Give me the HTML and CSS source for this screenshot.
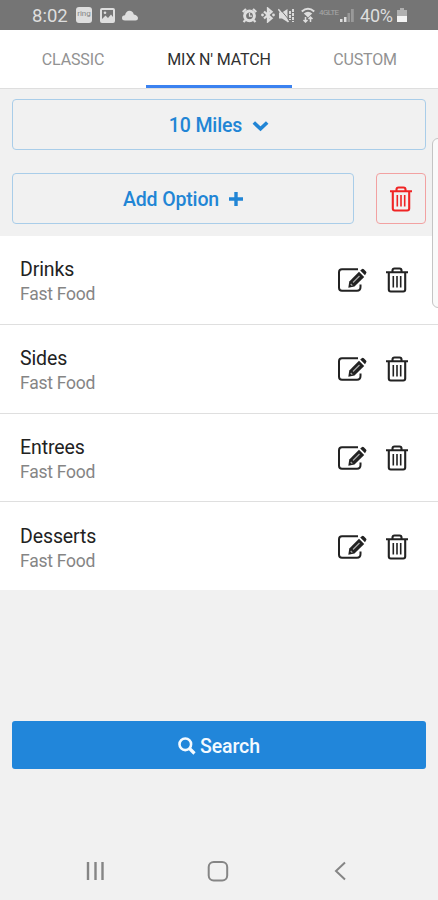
FILE: index.html
```
<!DOCTYPE html>
<html lang="en">
<head>
<meta charset="utf-8">
<title>Mix N' Match</title>
<link rel="stylesheet" href="styles.css">
</head>
<body>
<svg class="defs" aria-hidden="true">
  <symbol id="trash" viewBox="0 0 24 28">
    <path d="M1 6.200H23M7.500 6V4.500Q7.500 2.500 9.500 2.500H14.500Q16.500 2.500 16.500 4.500V6M3.800 6V23.500Q3.800 25.500 5.800 25.500H18.200Q20.200 25.500 20.200 23.500V6" fill="none" stroke="currentColor" stroke-width="2.100"/>
    <path d="M8.300 10V21.500M12 10V21.500M15.700 10V21.500" fill="none" stroke="currentColor" stroke-width="1.600"/>
  </symbol>
  <symbol id="edit" viewBox="0 0 30 26">
    <path d="M21 2.300H5Q2 2.300 2 5.300V20.700Q2 23.700 5 23.700H20Q23.500 23.700 23.500 20V17.500" fill="none" stroke="currentColor" stroke-width="2"/>
    <path d="M11.300 20.700L12.300 14.500L22 4.800L27.200 10L17.500 19.500Z" fill="currentColor"/>
    <path d="M23.200 3.600L24.800 2.200Q25.800 1.400 26.800 2.300L29 4.500Q30 5.500 29 6.500L28 8.300Z" fill="currentColor"/>
    <path d="M16 15.500L22.500 9M13.700 17L15.300 18.600" fill="none" stroke="#a5a5a5" stroke-width="1.300"/>
  </symbol>
</svg>
<div class="screen">
  <header class="status">
    <span class="clock">8:02</span>
    <span class="ring">ring</span>
    <svg class="photo" viewBox="0 0 15 15"><rect x="1" y="1" width="13" height="13" rx="1" fill="none" stroke="currentColor" stroke-width="2"/><path d="M2 11L5.500 7.500L8 10L11 6.500L13 9V13H2Z" fill="currentColor"/><circle cx="5" cy="4.800" r="1.300" fill="currentColor"/></svg>
    <svg class="cloud" viewBox="0 0 16 11"><path d="M3 10.500Q0 10.500 0 8Q0 5.500 3 5.300Q4 .8 7.500 .8Q10.800 .8 11.800 4.500Q16 5.500 16 8.300Q16 10.500 13.500 10.500Z" fill="currentColor"/></svg>
    <span class="spacer"></span>
    <svg class="alarm" viewBox="0 0 15 15"><path d="M.7 4L4 1M14.300 4L11 1M3.500 12L1.500 14M11.500 12L13.500 14" stroke="currentColor" stroke-width="2.200"/><circle cx="7.500" cy="7.800" r="4.900" fill="none" stroke="currentColor" stroke-width="3"/><path d="M7.500 5V8.200H10" fill="none" stroke="currentColor" stroke-width="1.200"/></svg>
    <svg class="bt" viewBox="0 0 14 16"><path d="M3 4.500L10.500 11.300L7 14.200V1.800L10.500 4.700L3 11.500" fill="none" stroke="currentColor" stroke-width="2.300"/><circle cx="1.500" cy="8" r="1.400" fill="currentColor"/><circle cx="12.500" cy="8" r="1.400" fill="currentColor"/></svg>
    <svg class="mute" viewBox="0 0 17 15"><path d="M1 4.500H4L9.500 1V14L4 10.500H1Z" fill="currentColor"/><path d="M1.500 .5L12 13" stroke="#757575" stroke-width="1"/><path d="M.3 1.200L10.500 14" stroke="currentColor" stroke-width="1.600"/><path d="M12 3V12M15 1V14" stroke="currentColor" stroke-width="1.900" stroke-dasharray="3 1"/></svg>
    <svg class="wifi" viewBox="0 0 14 16"><path d="M.8 4.500Q7 -1 13.200 4.500" fill="none" stroke="currentColor" stroke-width="2"/><path d="M2.800 6.500Q7 3 11.200 6.500L7 10.500Z" fill="currentColor"/><path d="M4.500 10V15M2.500 13L4.500 15L6.500 13M9.500 15V10M7.500 12L9.500 10L11.500 12" fill="none" stroke="currentColor" stroke-width="1.500"/></svg>
    <span class="lte">4GLTE</span>
    <svg class="signal" viewBox="0 0 14 14"><path d="M0 11H2.500V14H0ZM4 9H6.500V14H4Z" fill="currentColor"/><path d="M7.500 5H10V14H7.500ZM11 1H13.800V14H11Z" fill="#999"/></svg>
    <span class="percent">40%</span>
    <svg class="battery" viewBox="0 0 10 14"><path d="M3 0H7V2H10V8H0V2H3Z" fill="#b0b0b0"/><path d="M0 8H10V14H0Z" fill="#f4f4f4"/></svg>
  </header>
  <nav class="tabs">
    <a class="tab">CLASSIC</a>
    <a class="tab active">MIX N' MATCH</a>
    <a class="tab">CUSTOM</a>
  </nav>
  <section class="controls">
    <button class="btn">10 Miles<svg class="chevron" viewBox="0 0 17 12"><path d="M1.800 2.500L8.500 8.800L15.200 2.500" fill="none" stroke="currentColor" stroke-width="3.600"/></svg></button>
    <div class="line">
      <button class="btn add">Add Option<svg class="plus" viewBox="0 0 14 14"><path d="M7 0V14M0 7H14" stroke="currentColor" stroke-width="3.400"/></svg></button>
      <button class="btn danger"><svg class="trash"><use href="#trash"/></svg></button>
    </div>
  </section>
  <ul class="list">
    <li class="item"><div class="label"><div class="name">Drinks</div><div class="kind">Fast Food</div></div><svg class="edit"><use href="#edit"/></svg><svg class="trash"><use href="#trash"/></svg></li>
    <li class="item"><div class="label"><div class="name">Sides</div><div class="kind">Fast Food</div></div><svg class="edit"><use href="#edit"/></svg><svg class="trash"><use href="#trash"/></svg></li>
    <li class="item"><div class="label"><div class="name">Entrees</div><div class="kind">Fast Food</div></div><svg class="edit"><use href="#edit"/></svg><svg class="trash"><use href="#trash"/></svg></li>
    <li class="item"><div class="label"><div class="name">Desserts</div><div class="kind">Fast Food</div></div><svg class="edit"><use href="#edit"/></svg><svg class="trash"><use href="#trash"/></svg></li>
  </ul>
  <button class="search"><svg class="lens" viewBox="0 0 18 18"><circle cx="7.300" cy="7.300" r="5.800" fill="none" stroke="currentColor" stroke-width="2.600"/><path d="M11.500 11.500L16.500 16.500" stroke="currentColor" stroke-width="3.200"/></svg>Search</button>
  <footer class="navbar">
    <svg class="nav-icon" viewBox="0 0 22 22"><path d="M4 2V20M11.500 2V20M18.500 2V20" stroke="currentColor" stroke-width="2.400"/></svg>
    <svg class="nav-icon" viewBox="0 0 22 22"><rect x="1.700" y="2" width="18.500" height="18.500" rx="5" fill="none" stroke="currentColor" stroke-width="2"/></svg>
    <svg class="nav-icon" viewBox="0 0 22 22"><path d="M16 2.500L7 11L16 19.500" fill="none" stroke="currentColor" stroke-width="2"/></svg>
  </footer>
  <div class="edge-handle"></div>
</div>
</body>
</html>
```
FILE: styles.css
```
* { box-sizing: border-box; }
body { margin: 0; font-family: Roboto, "Liberation Sans", sans-serif; }
.defs { position: absolute; width: 0; height: 0; }
svg { display: block; flex: none; }
.screen {
  position: relative;
  width: 438px;
  height: 900px;
  overflow: hidden;
  display: flex;
  flex-direction: column;
  background: #f1f1f1;
}
.status {
  height: 30px;
  flex: none;
  display: flex;
  align-items: center;
  padding: 0 31px 0 32px;
  background: #757575;
  color: #dedede;
}
.clock { width: 44px; font-size: 18.500px; line-height: 30px; padding-top: 1px; }
.ring {
  width: 16px;
  height: 16px;
  border-radius: 3px;
  background: #dedede;
  color: #858585;
  font-size: 8px;
  line-height: 14px;
  text-align: center;
}
.photo { width: 15px; height: 15px; margin-left: 8px; }
.cloud { width: 16px; height: 11px; margin-left: 7px; }
.spacer { flex: 1; }
.alarm { width: 15px; height: 15px; margin-right: 4px; }
.bt { width: 14px; height: 16px; margin-right: 3px; }
.mute { width: 17px; height: 15px; margin-right: 6px; }
.wifi { width: 14px; height: 16px; margin-right: 4px; }
.lte { width: 21px; font-size: 8px; letter-spacing: -.6px; color: #a8a8a8; padding-bottom: 6px; }
.signal { width: 14px; height: 14px; margin-right: 6px; }
.percent { width: 37px; font-size: 18px; letter-spacing: -.2px; line-height: 30px; padding-top: 1px; }
.battery { width: 10px; height: 14px; }
.tabs {
  height: 59px;
  flex: none;
  display: flex;
  background: #fff;
  border-bottom: 1px solid #dedede;
}
.tab {
  flex: 1;
  text-align: center;
  font-size: 16px;
  line-height: 60px;
  letter-spacing: -.15px;
  color: #929292;
}
.active { color: #303030; border-bottom: 3px solid #3b82f0; }
.controls { height: 147px; flex: none; padding: 10px 12px 12px; display: flex; flex-direction: column; gap: 23px; }
.btn {
  width: 100%;
  height: 51px;
  flex: none;
  display: flex;
  align-items: center;
  justify-content: center;
  padding: 2px 0 0;
  border: 1px solid #a9cde9;
  border-radius: 4px;
  background: #f1f1f1;
  color: #2185d5;
  font: 500 19.500px Roboto, sans-serif;
  letter-spacing: -.15px;
}
.line { display: flex; justify-content: space-between; }
.add { width: 342px; }
.danger { width: 50px; padding: 0; border-color: #f2a1a1; color: #f02424; }
.chevron { width: 17px; height: 12px; margin-left: 10px; }
.plus { width: 14px; height: 14px; margin: 0 0 2px 10px; }
.trash { width: 24px; height: 28px; }
.edit { width: 30px; height: 26px; margin-right: 18px; }
.list { margin: 0; padding: 0; list-style: none; height: 354px; flex: none; display: flex; flex-direction: column; background: #fff; }
.item { flex: 1; display: flex; align-items: center; padding: 1px 29px 0 20px; border-bottom: 1px solid #dfdfdf; color: #222; }
.item:last-child { border-bottom: 0; }
.label { flex: 1; padding-top: 3px; }
.name { font-size: 19.500px; letter-spacing: -.1px; line-height: 25px; }
.kind { font-size: 17.500px; letter-spacing: -.25px; line-height: 24px; color: #858585; }
.search {
  height: 48px;
  flex: none;
  margin: 131px 12px 0;
  padding: 2px 0 0;
  border: 0;
  border-radius: 3px;
  display: flex;
  align-items: center;
  justify-content: center;
  gap: 4px;
  background: #2186da;
  color: #f4faff;
  font: 500 19.500px Roboto, sans-serif;
  letter-spacing: -.1px;
}
.lens { width: 18px; height: 18px; }
.navbar { height: 60px; flex: none; margin-top: 72px; display: flex; justify-content: space-between; padding: 0 87px 0 84px; align-items: center; color: #858585; }
.nav-icon { width: 22px; height: 22px; }
.edge-handle {
  position: absolute;
  top: 138px;
  right: -6px;
  width: 12px;
  height: 170px;
  border: 1px solid #c4c4c4;
  border-radius: 8px;
  background: #fafafa;
}
```
